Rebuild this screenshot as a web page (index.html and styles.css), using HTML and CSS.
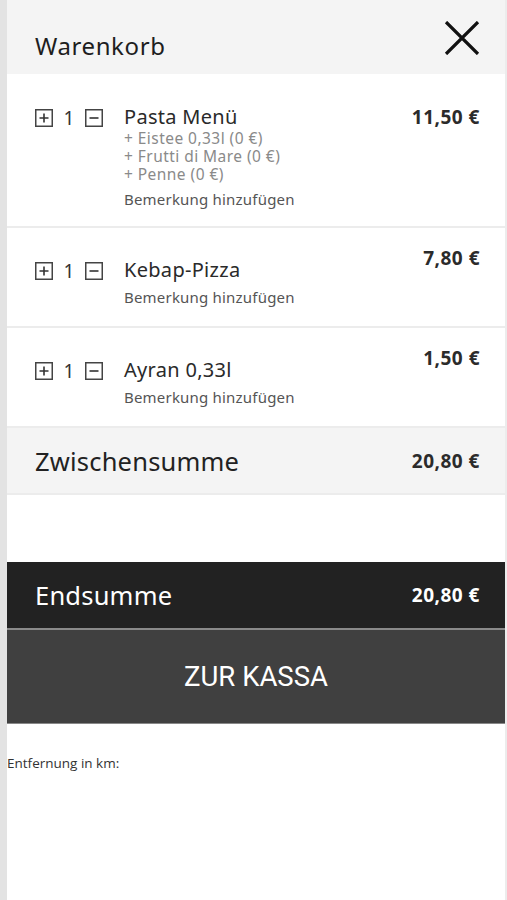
FILE: index.html
```html
<!DOCTYPE html>
<html lang="de">
<head>
<meta charset="utf-8">
<title>Warenkorb</title>
<link rel="stylesheet" href="styles.css">
</head>
<body>
<div class="page">
  <div class="sidebar"></div>
  <div class="cart">
    <header class="cart-header">
      <h1 class="cart-title">Warenkorb</h1>
      <svg class="close" width="36" height="34" viewBox="0 0 36 34"><path d="M2 1 L34 33 M34 1 L2 33" stroke="#111" stroke-width="3.2" fill="none"/></svg>
    </header>

    <div class="item item-first">
      <div class="qty">
        <span class="qbtn"><svg width="18" height="18" viewBox="0 0 18 18"><rect x="0.75" y="0.75" width="16.5" height="16.5" fill="none" stroke="#444" stroke-width="1.5"/><path d="M4.5 9 H13.5 M9 4.5 V13.5" stroke="#333" stroke-width="1.6"/></svg></span>
        <span class="qnum">1</span>
        <span class="qbtn"><svg width="18" height="18" viewBox="0 0 18 18"><rect x="0.75" y="0.75" width="16.5" height="16.5" fill="none" stroke="#444" stroke-width="1.5"/><path d="M4.5 9 H13.5" stroke="#333" stroke-width="1.6"/></svg></span>
      </div>
      <div class="info">
        <div class="name">Pasta Menü</div>
        <div class="opt">+ Eistee 0,33l (0 €)</div>
        <div class="opt">+ Frutti di Mare (0 €)</div>
        <div class="opt">+ Penne (0 €)</div>
        <div class="note">Bemerkung hinzufügen</div>
      </div>
      <div class="price">11,50 €</div>
    </div>

    <div class="item item-simple">
      <div class="qty">
        <span class="qbtn"><svg width="18" height="18" viewBox="0 0 18 18"><rect x="0.75" y="0.75" width="16.5" height="16.5" fill="none" stroke="#444" stroke-width="1.5"/><path d="M4.5 9 H13.5 M9 4.5 V13.5" stroke="#333" stroke-width="1.6"/></svg></span>
        <span class="qnum">1</span>
        <span class="qbtn"><svg width="18" height="18" viewBox="0 0 18 18"><rect x="0.75" y="0.75" width="16.5" height="16.5" fill="none" stroke="#444" stroke-width="1.5"/><path d="M4.5 9 H13.5" stroke="#333" stroke-width="1.6"/></svg></span>
      </div>
      <div class="info">
        <div class="name">Kebap-Pizza</div>
        <div class="note">Bemerkung hinzufügen</div>
      </div>
      <div class="price">7,80 €</div>
    </div>

    <div class="item item-simple">
      <div class="qty">
        <span class="qbtn"><svg width="18" height="18" viewBox="0 0 18 18"><rect x="0.75" y="0.75" width="16.5" height="16.5" fill="none" stroke="#444" stroke-width="1.5"/><path d="M4.5 9 H13.5 M9 4.5 V13.5" stroke="#333" stroke-width="1.6"/></svg></span>
        <span class="qnum">1</span>
        <span class="qbtn"><svg width="18" height="18" viewBox="0 0 18 18"><rect x="0.75" y="0.75" width="16.5" height="16.5" fill="none" stroke="#444" stroke-width="1.5"/><path d="M4.5 9 H13.5" stroke="#333" stroke-width="1.6"/></svg></span>
      </div>
      <div class="info">
        <div class="name">Ayran 0,33l</div>
        <div class="note">Bemerkung hinzufügen</div>
      </div>
      <div class="price">1,50 €</div>
    </div>

    <div class="sum-row subtotal">
      <span class="sum-label">Zwischensumme</span>
      <span class="sum-value">20,80 €</span>
    </div>

    <div class="spacer"></div>

    <div class="sum-row total">
      <span class="sum-label">Endsumme</span>
      <span class="sum-value">20,80 €</span>
    </div>

    <button class="checkout">ZUR KASSA</button>

    <div class="distance">Entfernung in km:</div>
  </div>
</div>
</body>
</html>
```

FILE: styles.css
```css
* { box-sizing: border-box; }
html, body { margin: 0; padding: 0; background: #fff; }
body { font-family: "Noto Sans", "Open Sans", sans-serif; color: #222; }

.page {
  display: flex;
  min-height: 900px;
}
.sidebar {
  width: 7px;
  flex: none;
  background: #e3e3e3;
}
.cart {
  flex: 1;
  border-right: 2px solid #ececec;
  display: flex;
  flex-direction: column;
}

.cart-header {
  height: 74px;
  background: #f4f4f4;
  display: flex;
  align-items: center;
  justify-content: space-between;
  padding: 0 25px 0 28px;
}
.cart-title {
  margin: 16px 0 0;
  font-size: 24px;
  font-weight: 400;
  color: #1e1e1e;
  letter-spacing: 0.6px;
}
.close { margin-top: 2px; }

.item {
  display: flex;
  align-items: flex-start;
  padding: 0 25px 0 28px;
  border-bottom: 2px solid #ececec;
}
.item-first { height: 154px; padding-top: 31px; }
.item-simple { height: 100px; padding-top: 30px; }

.qty {
  display: flex;
  align-items: center;
  width: 89px;
  flex: none;
  padding-top: 4px;
}
.qbtn { display: flex; width: 18px; height: 18px; }
.qnum {
  font-size: 19px;
  color: #333;
  width: 32px;
  text-align: center;
  line-height: 18px;
}
.info { flex: 1; }
.name {
  font-size: 20px;
  color: #2a2a2a;
  line-height: 24px;
  letter-spacing: 0.3px;
}
.opt {
  font-size: 15.5px;
  color: #8a8a8a;
  line-height: 18px;
  letter-spacing: 0.45px;
}
.note {
  font-size: 15px;
  color: #555;
  line-height: 18px;
  margin-top: 6px;
  letter-spacing: 0.2px;
}
.item-first .note { margin-top: 7px; }
.price {
  font-size: 19px;
  font-weight: 700;
  color: #2b2b2b;
  line-height: 24px;
  letter-spacing: 0.5px;
}
.item-simple .price { margin-top: -12px; }

.sum-row {
  display: flex;
  align-items: center;
  justify-content: space-between;
  padding: 0 25px 0 28px;
}
.subtotal {
  height: 67px;
  background: #f4f4f4;
  border-bottom: 2px solid #ececec;
}
.sum-label { font-size: 25.5px; font-weight: 400; letter-spacing: 0.2px; }
.sum-value { font-size: 19px; font-weight: 700; color: #2b2b2b; letter-spacing: 0.5px; }

.spacer { height: 67px; }

.total {
  height: 68px;
  background: #222;
  color: #fff;
  border-bottom: 2px solid #8a8a8a;
}
.total .sum-value { color: #fff; }

.checkout {
  height: 94px;
  background: #404040;
  border: none;
  border-bottom: 1px solid #888;
  color: #fff;
  font-family: "Roboto", "Liberation Sans", sans-serif;
  font-size: 27.5px;
  font-weight: 400;
  width: 100%;
  cursor: pointer;
  padding: 0;
}

.distance {
  margin-top: 30px;
  font-family: "Open Sans", "Noto Sans", sans-serif;
  font-size: 13.5px;
  color: #333;
}
```
